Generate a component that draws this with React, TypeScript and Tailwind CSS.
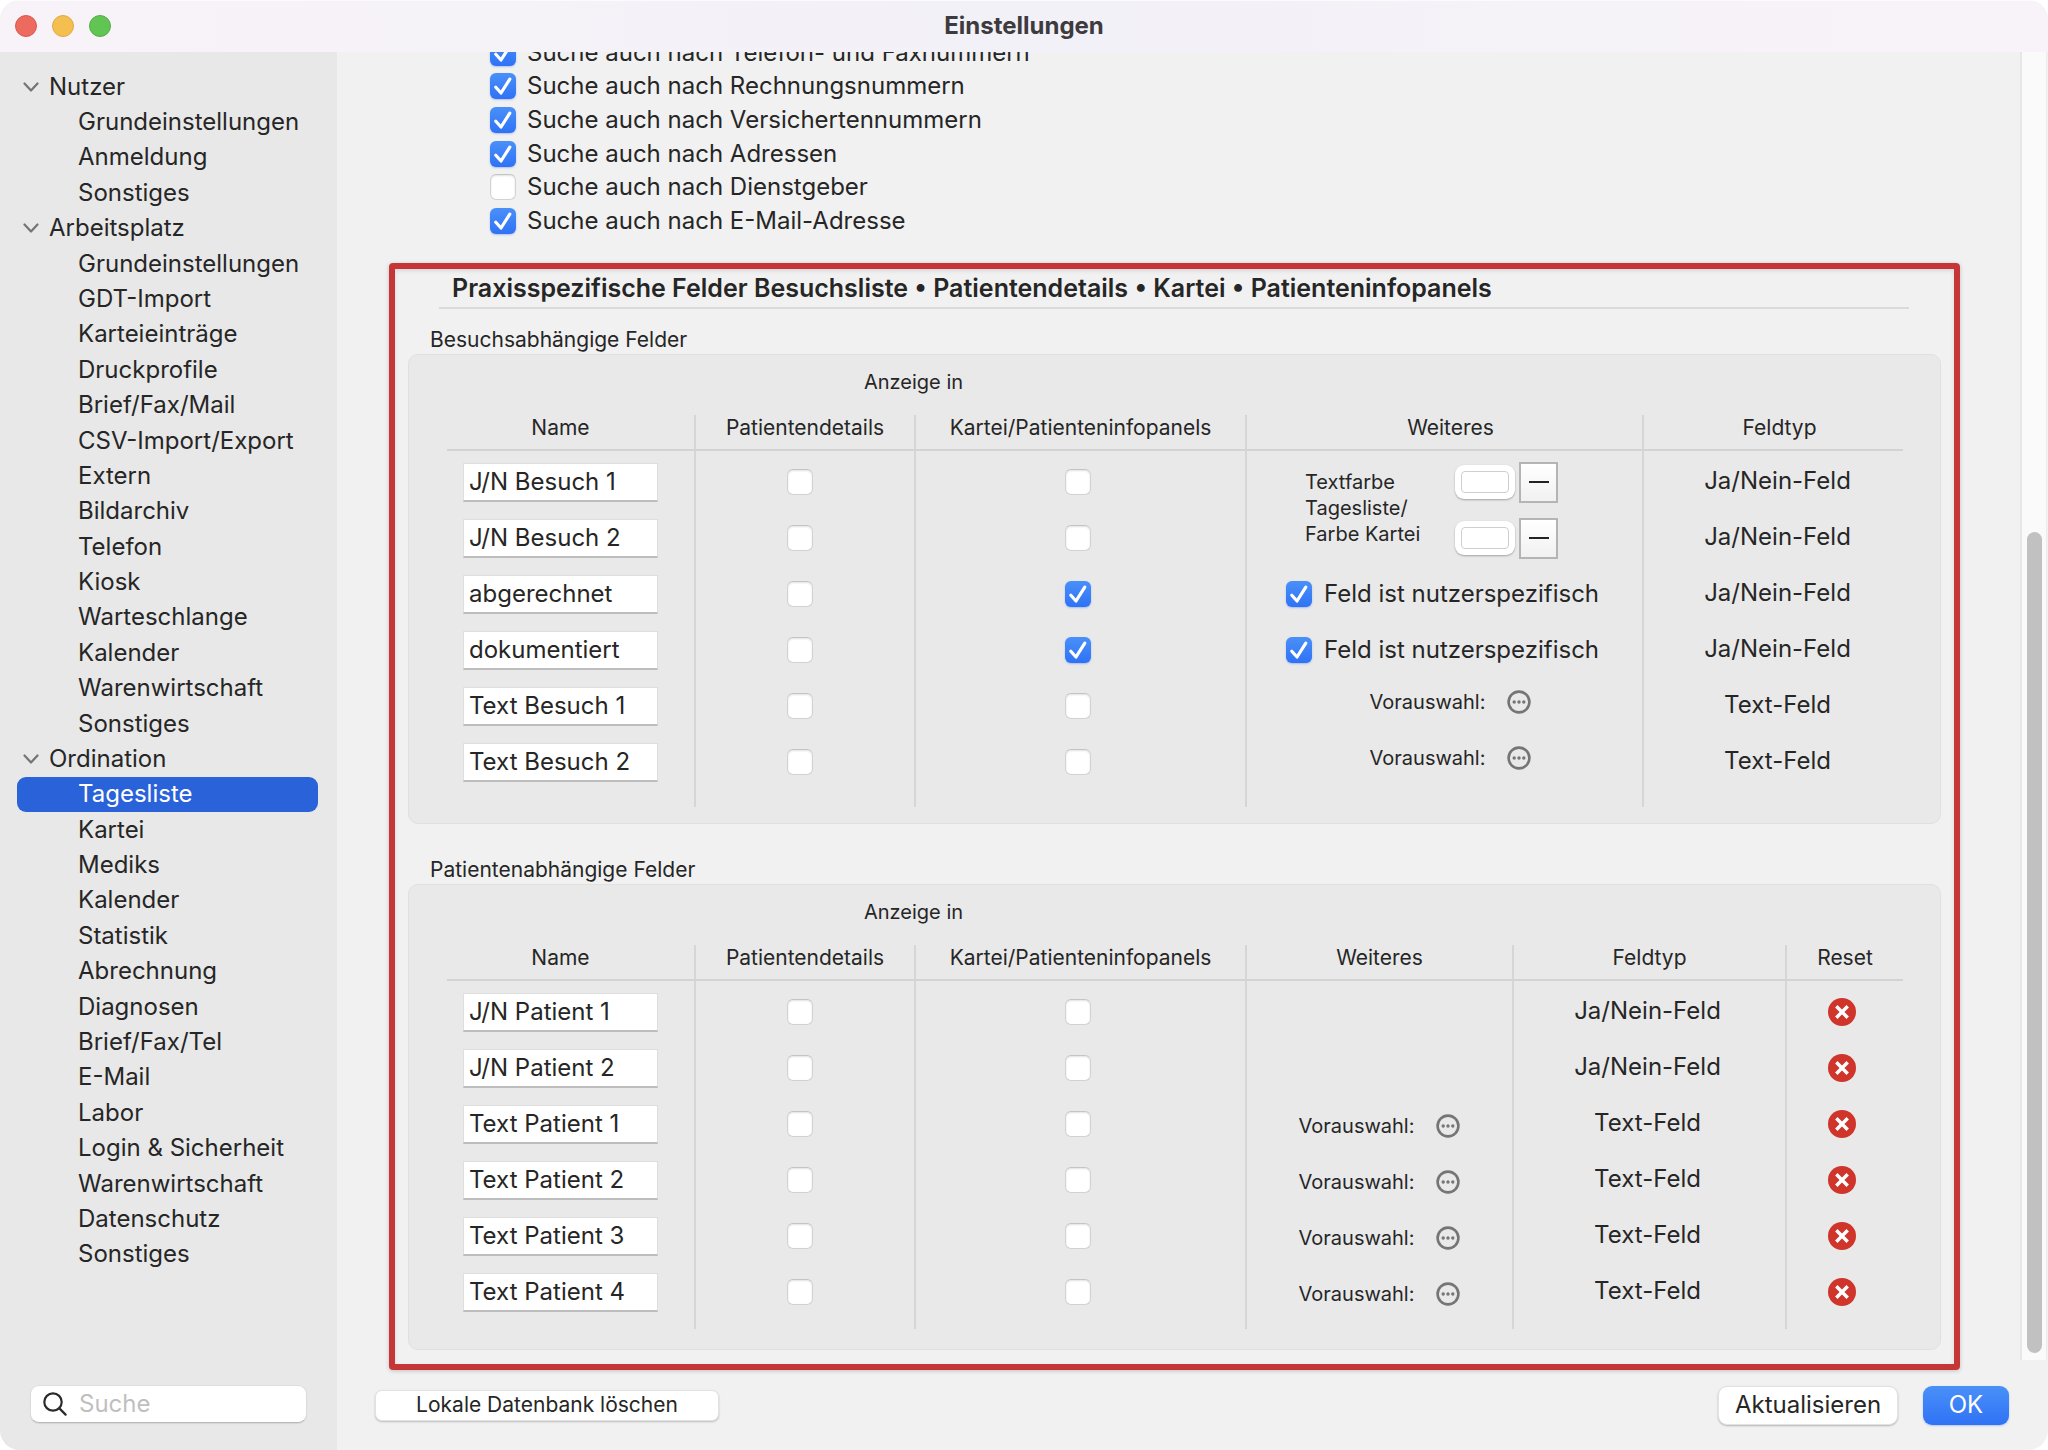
import { useState } from "react";

type NavGroup = { title: string; items: string[] };

const NAV: NavGroup[] = [
  { title: "Nutzer", items: ["Grundeinstellungen", "Anmeldung", "Sonstiges"] },
  {
    title: "Arbeitsplatz",
    items: [
      "Grundeinstellungen",
      "GDT-Import",
      "Karteieinträge",
      "Druckprofile",
      "Brief/Fax/Mail",
      "CSV-Import/Export",
      "Extern",
      "Bildarchiv",
      "Telefon",
      "Kiosk",
      "Warteschlange",
      "Kalender",
      "Warenwirtschaft",
      "Sonstiges",
    ],
  },
  {
    title: "Ordination",
    items: [
      "Tagesliste",
      "Kartei",
      "Mediks",
      "Kalender",
      "Statistik",
      "Abrechnung",
      "Diagnosen",
      "Brief/Fax/Tel",
      "E-Mail",
      "Labor",
      "Login & Sicherheit",
      "Warenwirtschaft",
      "Datenschutz",
      "Sonstiges",
    ],
  },
];

const SEARCH_OPTIONS = [
  { label: "Suche auch nach Telefon- und Faxnummern", on: true },
  { label: "Suche auch nach Rechnungsnummern", on: true },
  { label: "Suche auch nach Versichertennummern", on: true },
  { label: "Suche auch nach Adressen", on: true },
  { label: "Suche auch nach Dienstgeber", on: false },
  { label: "Suche auch nach E-Mail-Adresse", on: true },
];

type Extra = "color" | "none" | "user" | "preset";
type Row = { name: string; kartei: boolean; extra: Extra; type: string };

const VISIT_ROWS: Row[] = [
  { name: "J/N Besuch 1", kartei: false, extra: "color", type: "Ja/Nein-Feld" },
  { name: "J/N Besuch 2", kartei: false, extra: "none", type: "Ja/Nein-Feld" },
  { name: "abgerechnet", kartei: true, extra: "user", type: "Ja/Nein-Feld" },
  { name: "dokumentiert", kartei: true, extra: "user", type: "Ja/Nein-Feld" },
  { name: "Text Besuch 1", kartei: false, extra: "preset", type: "Text-Feld" },
  { name: "Text Besuch 2", kartei: false, extra: "preset", type: "Text-Feld" },
];

const PATIENT_ROWS: Row[] = [
  { name: "J/N Patient 1", kartei: false, extra: "none", type: "Ja/Nein-Feld" },
  { name: "J/N Patient 2", kartei: false, extra: "none", type: "Ja/Nein-Feld" },
  { name: "Text Patient 1", kartei: false, extra: "preset", type: "Text-Feld" },
  { name: "Text Patient 2", kartei: false, extra: "preset", type: "Text-Feld" },
  { name: "Text Patient 3", kartei: false, extra: "preset", type: "Text-Feld" },
  { name: "Text Patient 4", kartei: false, extra: "preset", type: "Text-Feld" },
];

function Check({ on, label }: { on: boolean; label?: string }) {
  return (
    <span className="relative inline-grid size-[26px] shrink-0 align-middle">
      <input
        type="checkbox"
        defaultChecked={on}
        aria-label={label}
        className="peer size-[26px] appearance-none rounded-[6px] border border-[#d2d2d2] border-t-[#c4c4c4] bg-white shadow-[inset_0_1px_2px_rgba(0,0,0,0.12)] checked:border-0 checked:bg-linear-to-b checked:from-[#4a90f8] checked:to-[#2f72f5] checked:shadow-[0_1px_2px_rgba(40,100,240,0.35)]"
      />
      <svg
        viewBox="0 0 26 26"
        className="pointer-events-none absolute inset-0 hidden size-[26px] peer-checked:block"
        fill="none"
        stroke="#fff"
        strokeWidth="3.200"
        strokeLinecap="round"
        strokeLinejoin="round"
      >
        <path d="M5.800 14.200 11 20 19.800 6.200" />
      </svg>
    </span>
  );
}

function Sidebar() {
  const [active, setActive] = useState("Ordination/Tagesliste");
  return (
    <aside className="flex w-[337px] shrink-0 flex-col bg-[#e8e8e8] pt-[17px]">
      <nav className="grid flex-1 auto-rows-fr px-[17px] text-[24px]">
        {NAV.flatMap((group) => [
          <button
            key={group.title}
            type="button"
            aria-expanded="true"
            className="flex items-center gap-[10px] pl-[6px] text-left leading-[34px]"
          >
            <svg viewBox="0 0 16 10" className="h-[10px] w-4" fill="none" stroke="#747474" strokeWidth="2.200" strokeLinecap="round" strokeLinejoin="round">
              <path d="M1.500 1.500 8 8.500l6.500-7" />
            </svg>
            {group.title}
          </button>,
          ...group.items.map((item) => {
            const id = group.title + "/" + item;
            return (
              <a
                key={id}
                href={"#" + id}
                onClick={() => setActive(id)}
                className={
                  id === active
                    ? "mr-[2px] flex items-center rounded-[9px] bg-[#2a62d9] pl-[61px] leading-[34px] text-white"
                    : "flex items-center pl-[61px] leading-[34px]"
                }
              >
                {item}
              </a>
            );
          }),
        ])}
      </nav>
      <div className="px-[30px] pt-[113px] pb-[27px]">
        <label className="flex h-[38px] items-center gap-3 rounded-[9px] border border-[#dcdcdc] border-b-[#b9b9b9] bg-white pl-3 shadow-[0_1px_1px_rgba(0,0,0,0.08)]">
          <svg viewBox="0 0 24 24" className="size-6 shrink-0" fill="none" stroke="#2b2b2b" strokeWidth="2.200" strokeLinecap="round">
            <circle cx="10" cy="10" r="8.700" />
            <path d="m16.400 16.400 6.200 6.200" />
          </svg>
          <input type="search" aria-label="Suche" placeholder="Suche" className="w-full min-w-0 bg-transparent text-[24px] outline-none placeholder:text-[#bfbfbf]" />
        </label>
      </div>
    </aside>
  );
}

function Preset({ name, raised }: { name: string; raised: boolean }) {
  return (
    <div className={raised ? "flex items-center justify-center gap-[22px] pb-2 pl-3" : "flex items-center justify-center gap-[22px] pt-1"}>
      <span className="text-[20px] leading-6">Vorauswahl:</span>
      <button type="button" aria-label={"Vorauswahl " + name} className="size-6">
        <svg viewBox="0 0 24 24" className="size-6">
          <circle cx="12" cy="12" r="10.400" fill="none" stroke="#757575" strokeWidth="2.600" />
          <g fill="#757575">
            <circle cx="7.200" cy="12" r="1.700" />
            <circle cx="12" cy="12" r="1.700" />
            <circle cx="16.800" cy="12" r="1.700" />
          </g>
        </svg>
      </button>
    </div>
  );
}

function ColorChooser({ label }: { label: string }) {
  return (
    <div className="flex h-14 items-center gap-1">
      <input
        type="color"
        defaultValue="#ffffff"
        aria-label={label}
        className="h-[34px] w-[60px] appearance-none rounded-[9px] bg-white px-[6px] py-[6px] shadow-[0_1px_2px_rgba(0,0,0,0.3)] [&::-webkit-color-swatch]:rounded-[4px] [&::-webkit-color-swatch]:border [&::-webkit-color-swatch]:border-[#cfcfcf] [&::-webkit-color-swatch-wrapper]:p-0"
      />
      <button
        type="button"
        aria-label={label + " entfernen"}
        className="grid h-[41px] w-[39px] place-items-center border-2 border-[#b4b4b4] bg-linear-to-b from-white to-[#f1f1f1]"
      >
        <span className="h-[2px] w-5 bg-[#222]" />
      </button>
    </div>
  );
}

function ExtraContent({ row, raised }: { row: Row; raised: boolean }) {
  if (row.extra === "color") {
    return (
      <div className="flex items-start pl-[58px]">
        <p className="w-[150px] pt-[15px] text-[20px] leading-[26px]">
          Textfarbe
          <br />
          Tagesliste/
          <br />
          Farbe Kartei
        </p>
        <div>
          <ColorChooser label="Textfarbe Tagesliste" />
          <ColorChooser label="Farbe Kartei" />
        </div>
      </div>
    );
  }
  if (row.extra === "user") {
    return (
      <label className="flex items-center gap-3 pl-[39px] text-[24px] leading-7 whitespace-nowrap">
        <Check on />
        Feld ist nutzerspezifisch
      </label>
    );
  }
  if (row.extra === "preset") return <Preset name={row.name} raised={raised} />;
  return null;
}

function ResetButton({ name }: { name: string }) {
  return (
    <button type="button" aria-label={name + " zurücksetzen"} className="block size-7">
      <svg viewBox="0 0 28 28" className="size-7">
        <circle cx="14" cy="14" r="14" fill="#cf352b" />
        <path d="m8.300 8.300 11.400 11.400m0-11.400-11.400 11.400" stroke="#fff" strokeWidth="3.400" strokeLinecap="butt" />
      </svg>
    </button>
  );
}

const HEAD = "h-9 border-b-2 border-b-[#d3d3d3] p-0 pb-2 text-[21px] leading-6 font-normal whitespace-nowrap";
const HEAD_LINE = HEAD + " border-l-2 border-l-[#d6d6d6]";
const LINE = "border-l-2 border-l-[#d6d6d6]";

function FieldTable({ title, rows, reset }: { title: string; rows: Row[]; reset: boolean }) {
  return (
    <section>
      <h3 className="pl-[22px] text-[21px] leading-7">{title}</h3>
      <div className={reset ? "rounded-[10px] border border-[#e0e0e0] bg-[#e9e9e9] px-[38px] pb-5" : "rounded-[10px] border border-[#e0e0e0] bg-[#e9e9e9] px-[38px] pb-4"}>
        <table className="w-full table-fixed border-separate border-spacing-0">
          <colgroup>
            <col className="w-[247px]" />
            <col className="w-[220px]" />
            <col className="w-[331px]" />
            <col className={reset ? "w-[267px]" : "w-[397px]"} />
            <col className={reset ? "w-[273px]" : "w-[261px]"} />
            {reset && <col className="w-[118px]" />}
          </colgroup>
          <thead>
            <tr>
              <td />
              <th colSpan={2} className="h-[60px] p-0 pt-3 pr-28 align-top text-[20px] leading-[30px] font-normal">
                Anzeige in
              </th>
              <td colSpan={reset ? 3 : 2} />
            </tr>
            <tr>
              <th scope="col" className={HEAD + " pr-5"}>Name</th>
              <th scope="col" className={HEAD_LINE}>Patientendetails</th>
              <th scope="col" className={HEAD_LINE}>Kartei/Patienteninfopanels</th>
              <th scope="col" className={reset ? HEAD_LINE : HEAD_LINE + " pl-3"}>Weiteres</th>
              <th scope="col" className={reset ? HEAD_LINE : HEAD_LINE + " pl-3"}>Feldtyp</th>
              {reset && <th scope="col" className={HEAD_LINE}>Reset</th>}
            </tr>
          </thead>
          <tbody className="text-[24px]">
            {rows.map((row, i) => {
              const pad = i === 0 ? "h-[59px] p-0 pt-[3px]" : i < rows.length - 1 ? "h-14 p-0" : reset ? "h-[65px] p-0 pb-[9px]" : "h-[73px] p-0 pb-[17px]";
              const covered = !reset && i === 1;
              return (
                <tr key={row.name}>
                  <td className={pad}>
                    <input
                      type="text"
                      aria-label={"Name " + row.name}
                      defaultValue={row.name}
                      className="ml-4 block h-[39px] w-[195px] border border-[#dedede] border-b-2 border-b-[#bdbdbd] bg-white pl-[5px] outline-none"
                    />
                  </td>
                  <td className={pad + " " + LINE}>
                    <div className="flex justify-center pr-[10px]">
                      <Check on={false} label={row.name + " in Patientendetails"} />
                    </div>
                  </td>
                  <td className={pad + " " + LINE}>
                    <div className="flex justify-center pr-[6px]">
                      <Check on={row.kartei} label={row.name + " in Kartei/Patienteninfopanels"} />
                    </div>
                  </td>
                  {!covered && (
                    <td rowSpan={row.extra === "color" ? 2 : 1} className={pad + " " + LINE}>
                      <ExtraContent row={row} raised={!reset} />
                    </td>
                  )}
                  <td className={pad + " " + LINE}>
                    <div className={reset ? "pr-1 pb-[2px] text-center leading-7" : "pb-[2px] pl-2 text-center leading-7"}>{row.type}</div>
                  </td>
                  {reset && (
                    <td className={pad + " " + LINE}>
                      <div className="flex justify-center pr-[6px]">
                        <ResetButton name={row.name} />
                      </div>
                    </td>
                  )}
                </tr>
              );
            })}
          </tbody>
        </table>
      </div>
    </section>
  );
}

export default function App() {
  return (
    <div className="min-h-screen bg-white font-['Inter','Liberation_Sans',sans-serif] text-[#262626]">
      <div className="flex min-h-screen flex-col overflow-hidden rounded-[20px] bg-[#f1f1f1]">
        <header className="grid h-[52px] shrink-0 grid-cols-[1fr_auto_1fr] items-center border-t border-[#fcfbfc] bg-linear-to-r from-[#f8f3f9] via-[#f2f1f7] to-[#f8f3f9] px-[15px] pb-[2px]">
          <div className="flex gap-[15px]">
            <button type="button" aria-label="Schließen" className="size-[22px] rounded-full border border-[#d8594e] bg-[#ec6a5e]" />
            <button type="button" aria-label="Minimieren" className="size-[22px] rounded-full border border-[#dcab43] bg-[#f4bf4f]" />
            <button type="button" aria-label="Zoomen" className="size-[22px] rounded-full border border-[#52ad43] bg-[#61c554]" />
          </div>
          <h1 className="text-[24px] leading-8 font-bold text-[#3d3b3e]">Einstellungen</h1>
        </header>
        <div className="flex flex-1">
          <Sidebar />
          <main className="flex min-w-0 flex-1 flex-col">
            <div className="flex">
              <div className="min-w-0 flex-1 pr-[60px] pl-[52px]">
                <div className="overflow-hidden pl-[101px]">
                  <div className="-mt-4 grid h-[202px] auto-rows-fr text-[24px]">
                    {SEARCH_OPTIONS.map((o) => (
                      <label key={o.label} className="flex items-center gap-[11px] leading-8">
                        <Check on={o.on} />
                        {o.label}
                      </label>
                    ))}
                  </div>
                </div>
                <section className="mt-[25px] rounded-[4px] border-6 border-[#c73636] px-[13px] pb-[14px] shadow-[0_1px_4px_rgba(0,0,0,0.2),inset_0_2px_4px_rgba(0,0,0,0.1)]">
                  <h2 className="mr-8 ml-[31px] h-10 border-b-2 border-[#dadada] pl-[13px] text-[25px] leading-[38px] font-semibold whitespace-nowrap">
                    Praxisspezifische Felder Besuchsliste • Patientendetails • Kartei • Patienteninfopanels
                  </h2>
                  <div className="flex flex-col gap-8 pt-[17px]">
                    <FieldTable title="Besuchsabhängige Felder" rows={VISIT_ROWS} reset={false} />
                    <FieldTable title="Patientenabhängige Felder" rows={PATIENT_ROWS} reset />
                  </div>
                </section>
              </div>
              <div className="mr-px mb-[10px] flex w-[27px] flex-col items-center border-r border-l-2 border-r-[#ececec] border-l-[#e6e6e6] bg-[#fafafa] pt-[480px] pb-[7px]">
                <div className="w-[15px] flex-1 rounded-full bg-[#c1c1c1]" />
              </div>
            </div>
            <footer className="flex flex-1 items-center pr-[39px] pb-[10px] pl-[38px]">
              <button type="button" className="h-[31px] w-[344px] rounded-[7px] border border-[#e2e2e2] bg-white text-[21px] leading-7 shadow-[0_1px_2px_rgba(0,0,0,0.22)]">
                Lokale Datenbank löschen
              </button>
              <button type="button" className="ml-auto h-[39px] w-[180px] rounded-[9px] border border-[#e2e2e2] bg-white text-[24px] leading-8 shadow-[0_1px_2px_rgba(0,0,0,0.25)]">
                Aktualisieren
              </button>
              <button type="button" className="ml-[25px] h-[39px] w-[86px] rounded-[9px] bg-linear-to-b from-[#4a90f8] to-[#2f72f5] text-[24px] leading-8 text-white shadow-[0_1px_2px_rgba(40,100,240,0.3)]">
                OK
              </button>
            </footer>
          </main>
        </div>
      </div>
    </div>
  );
}
